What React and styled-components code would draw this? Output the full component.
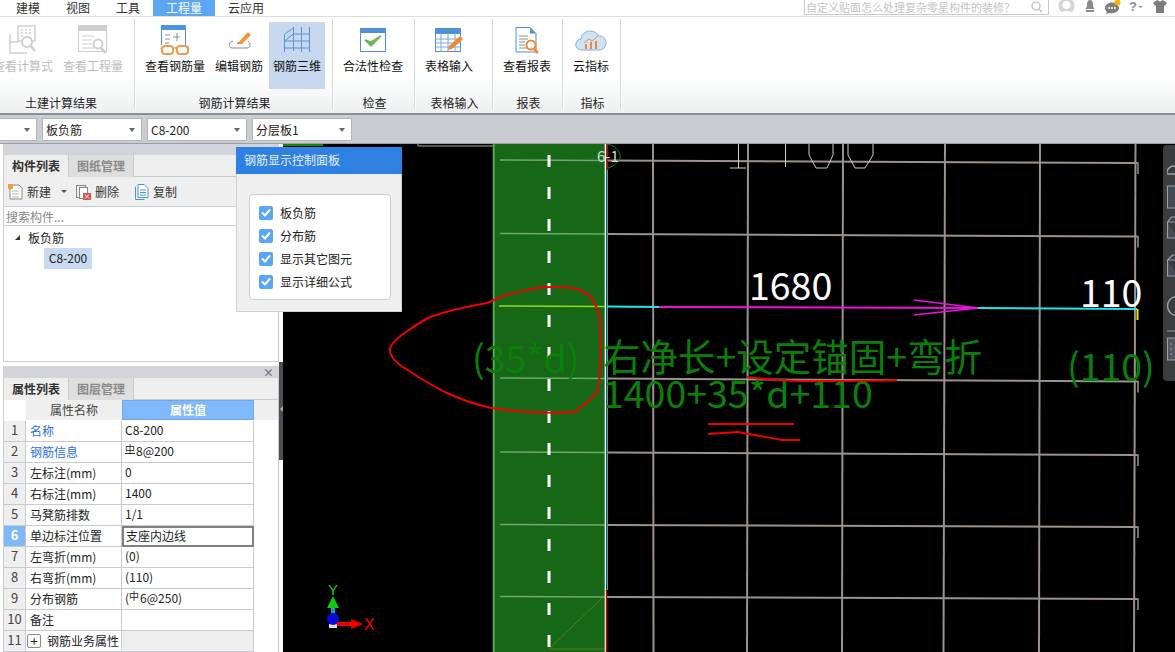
import React from "react";
import styled, { createGlobalStyle } from "styled-components";

const Global = createGlobalStyle`
  html, body { margin: 0; padding: 0; width: 1175px; height: 652px; overflow: hidden; background: #fff; }
  body, button, input { font-family: "Noto Sans CJK SC", "Noto Sans", sans-serif; font-size: 12px; }
  * { box-sizing: border-box; }
`;

const Page = styled.div`
  width: 1175px; height: 652px; display: flex; flex-direction: column; overflow: hidden; color: #1a1a1a;
`;

/* ---------- top menu ---------- */
const MenuBar = styled.div`
  height: 17px; flex: none; display: flex; padding-left: 3px; border-bottom: 1px solid #dcdcdc; background: #fff; overflow: hidden;
`;
const MenuTab = styled.div`
  height: 16px; line-height: 15px; padding: 0 13px; color: ${p => (p.$active ? "#fff" : "#333")};
  background: ${p => (p.$active ? "#5ba5f2" : "transparent")};
`;
const MenuRight = styled.div`
  margin-left: auto; display: flex; align-items: flex-start; height: 16px;
`;
const SearchBox = styled.div`
  width: 245px; height: 15px; border: 1px solid #c8c8c8; border-top: 0; display: flex; align-items: center; justify-content: space-between;
  padding: 0 5px 0 1px; color: #c4c4c4; font-size: 11px; line-height: 13px; margin-right: 9px;
`;
const TopIcons = styled.div`
  display: flex; align-items: flex-start; gap: 8px; padding-right: 8px; height: 15px;
`;

/* ---------- ribbon ---------- */
const Ribbon = styled.div`
  height: 98px; flex: none; display: flex; padding: 2px 0 4px; margin-left: 0;
  background: linear-gradient(#fff 0, #fff 62%, #edf0f0 100%);
  border-bottom: 2px solid #8b8f94; overflow: hidden;
`;
const Group = styled.div`
  flex: none; width: ${p => p.$w}px; margin-left: ${p => p.$ml || 0}px; height: 91px;
  border-right: 1px solid #d6dada; box-shadow: 1px 0 0 #fff;
  display: flex; flex-direction: column; padding: 3px 0 0 ${p => p.$pl ?? 6}px;
`;
const GroupButtons = styled.div`
  display: flex; gap: 2px; height: 67px;
`;
const GroupLabel = styled.div`
  margin: 7px 0 0 -${p => p.$pl ?? 6}px; height: 14px; line-height: 14px; padding-left: 2px; text-align: center; color: #222;
`;
const RibbonButton = styled.div`
  display: flex; flex-direction: column; align-items: center; height: 67px; padding: 2px 4px 0;
  background: ${p => (p.$active ? "#c7d7ee" : "transparent")};
  color: ${p => (p.$off ? "#bdbdbd" : "#111")};
`;
const IconSlot = styled.div`
  height: 32px; display: flex; align-items: center; justify-content: center;
`;
const ButtonText = styled.div`
  margin-top: 3px; height: 14px; line-height: 14px; white-space: nowrap;
`;

/* ---------- selector strip ---------- */
const SelectStrip = styled.div`
  height: 29px; flex: none; background: #c9ccd1; display: flex; gap: 5px; padding-top: 3px; border-bottom: 1px solid #9ca0a6;
`;
const Select = styled.div`
  width: ${p => p.$w || 100}px; height: 23px; background: #fff; border: 1px solid #b2b4b8; border-radius: 1px;
  ${p => p.$cut && "border-left: 0;"}
  display: flex; align-items: center; justify-content: space-between; padding: 0 6px 0 3px; color: #222;
  &::after { content: ""; border: 3.5px solid transparent; border-top: 4px solid #666; margin-top: 4px; margin-left: auto; }
`;

/* ---------- main ---------- */
const Main = styled.div`
  flex: 1; min-height: 0; display: flex; position: relative;
`;
const Sidebar = styled.div`
  width: 283px; flex: none; background: #fff; display: flex; flex-direction: column; position: relative;
`;
const Pane = styled.div`
  width: 276px; margin-left: 3px; border: 1px solid #c8ccd2; border-top: 0; display: flex; flex-direction: column; background: #fff;
`;
const TitleStrip = styled.div`
  margin-left: -1px; margin-right: -1px; height: ${p => p.$h}px; background: #d2d4d9; flex: none; display: flex; justify-content: flex-end; align-items: center; padding-right: 5px;
  color: #777; font-size: 11px; font-weight: 700; line-height: ${p => p.$h}px;
`;
const Tabs = styled.div`
  display: flex; height: 22px; flex: none; background: #eee; border-bottom: 1px solid #c8ccd2;
`;
const Tab = styled.div`
  width: 65px; height: 22px; line-height: 21px; text-align: center; font-weight: 700; border-right: 1px solid #c8ccd2;
  background: ${p => (p.$active ? "#eee" : "#dedede")}; color: ${p => (p.$active ? "#333" : "#8a8a8a")};
`;
const ActionBar = styled.div`
  height: 30px; flex: none; background: #efefef; border-bottom: 1px solid #c8ccd2; display: flex; align-items: center; padding-left: 4px; color: #333;
`;
const Action = styled.div`
  display: flex; align-items: center; gap: 4px; margin-right: ${p => p.$mr}px;
`;
const Caret = styled.span`
  border: 3px solid transparent; border-top: 3.5px solid #555; margin: 3px 0 0 6px;
`;
const SearchField = styled.div`
  height: 19px; flex: none; line-height: 19px; padding-left: 2px; color: #888; border-bottom: 1px solid #c8ccd2;
`;
const Tree = styled.div`
  height: 135px; flex: none; padding-top: 2px;
`;
const TreeRoot = styled.div`
  display: flex; align-items: center; height: 19px; padding-left: 11px; gap: 8px; color: #222;
`;
const TreeArrow = styled.span`
  width: 0; height: 0; border-left: 5px solid transparent; border-bottom: 5px solid #333;
`;
const TreeLeaf = styled.div`
  margin: 1px 0 0 40px; width: 48px; height: 21px; line-height: 20px; text-align: center; background: #c8daf1; color: #222;
`;
const Gap = styled.div` height: 4px; flex: none; `;

const Grid = styled.div`
  display: grid; grid-template-columns: 22px 96px 132px 1fr; grid-auto-rows: 21px; line-height: 18px; background: #fff;
`;
const HeadCell = styled.div`
  background: ${p => (p.$val ? "#7fb9fa" : p.$blank ? "#fff" : "#efefef")};
  color: ${p => (p.$val ? "#fff" : "#444")}; text-align: center; font-weight: ${p => (p.$val ? 700 : 400)}; height: 20px; line-height: ${p => (p.$val ? "18px" : "20px")};
  ${p => p.$val && "border: 1px solid #6ea8ea;"}
`;
const IndexCell = styled.div`
  text-align: center; font-size: 13px; color: ${p => (p.$on ? "#fff" : "#444")}; font-weight: ${p => (p.$on ? 700 : 400)};
  background: ${p => (p.$on ? "#7fb9fa" : "#efefef")}; border-right: 1px solid #c8ccd2; border-bottom: 1px solid #c8ccd2;
`;
const NameCell = styled.div`
  padding: 0 0 1px 4px; color: ${p => (p.$link ? "#2b6fe6" : "#222")}; white-space: nowrap; border-right: 1px solid #c8ccd2; border-bottom: 1px solid #c8ccd2;
  display: flex; align-items: center; gap: 6px;
`;
const ValueCell = styled.div`
  padding-left: 3px; white-space: nowrap; color: #222; border-right: 1px solid #c8ccd2; border-bottom: 1px solid #c8ccd2;
  background: ${p => (p.$fill ? "#eee" : "#fff")};
  ${p => p.$focus && "border: 2px solid #808080; padding-left: 2px; line-height: 16px;"}
`;
const RestCell = styled.div``;
const Plus = styled.span`
  width: 14px; height: 14px; border: 1px solid #888; border-radius: 2px; display: flex; align-items: center; justify-content: center; font-size: 13px; line-height: 11px; margin-left: -3px;
`;
const Steel = styled.span`
  display: inline-block; font-size: 10px; line-height: 10px; vertical-align: 3px; margin-right: 1px;
  ${p => p.$bar && "border-bottom: 1px solid #222; height: 10px;"}
`;
const SplitBar = styled.div`
  position: absolute; right: 0; top: 218px; width: 4px; height: 98px; background: #4d4f52;
  &::after { content: ""; position: absolute; top: 44px; left: 0; border: 3px solid transparent; border-right: 3px solid #aaa; margin-left: -2px; }
`;

/* ---------- canvas ---------- */
const Canvas = styled.div`
  flex: 1; background: #000; position: relative; overflow: hidden;
  svg.cad { display: block; }
`;
const FloatTools = styled.div`
  position: absolute; right: 0; top: 1px; width: 12px; height: 236px; background: #3b3c3e; border-radius: 4px 0 0 4px; overflow: hidden;
  padding: 15px 0 0 4px; display: flex; flex-direction: column;
`;

/* ---------- control popup ---------- */
const Popup = styled.div`
  position: absolute; left: 236px; top: 3px; width: 166px; height: 165px; background: #efefef; border: 1px solid #c9d0dc; border-top: 0;
`;
const PopupTitle = styled.div`
  height: 27px; margin: 0 -1px; background: #2e80e2; color: #e8f1fc; line-height: 26px; padding-left: 8px;
`;
const PopupBox = styled.div`
  margin: 20px 0 0 12px; width: 142px; height: 106px; background: #fff; border: 1px solid #ccc; border-radius: 4px; padding: 6px 0 0 9px;
`;
const CheckRow = styled.div`
  height: 23px; display: flex; align-items: center; gap: 7px; color: #222;
`;
const CheckBox = styled.span`
  width: 14px; height: 14px; background: #5aa6f6; border-radius: 2px; display: flex; align-items: center; justify-content: center;
`;

/* ---------- icons ---------- */
const IconCalc = () => (
  <svg width="28" height="30" viewBox="0 0 28 30" fill="none" stroke="#cfcfcf" strokeWidth="1.5">
    <path d="M1 9v19h17M1 17h8" /><rect x="9" y="1" width="17" height="15" fill="#fff" />
    <path d="M12 5h2M16 5h2M20 5h2M12 8h2M16 8h2M20 8h2M12 11h2" strokeWidth="1.5" />
    <circle cx="18" cy="17" r="5" fill="#fff" strokeWidth="2" /><path d="M22 21l4 5" strokeWidth="2.5" />
  </svg>
);
const IconQty = () => (
  <svg width="30" height="30" viewBox="0 0 30 30" fill="none" stroke="#d0d0d0" strokeWidth="1.2">
    <rect x="0.5" y="0.5" width="28" height="26" /><rect x="0" y="0" width="29" height="6" fill="#cfcfcf" stroke="none" />
    <path d="M4 11h12M4 15h10M4 19h10M4 23h12" />
    <circle cx="20" cy="19" r="4.5" fill="#fff" strokeWidth="2" /><path d="M23 23l5 5" strokeWidth="2.5" />
  </svg>
);
const IconGlasses = () => (
  <svg width="30" height="30" viewBox="0 0 30 30" fill="none">
    <path d="M1.5 20V.5h24V20" fill="#fff" stroke="#4f8fdc" strokeWidth="1" />
    <rect x="1" y="0" width="25" height="5" fill="#4f94e4" />
    <path d="M5 10h5M5 14h5M5 18h4M13 12h7M17 8v8" stroke="#8a8f96" strokeWidth="1" fill="none" />
    <rect x="2" y="21" width="11" height="8" rx="3" fill="#fff" stroke="#f19a50" strokeWidth="2" />
    <rect x="17" y="21" width="11" height="8" rx="3" fill="#fff" stroke="#f19a50" strokeWidth="2" />
    <path d="M13 23h4M2 22l-1 2M28 22l1 2" stroke="#f19a50" strokeWidth="1.6" />
  </svg>
);
const IconEdit = () => (
  <svg width="25" height="19" viewBox="0 0 25 19" fill="none">
    <path d="M6 10C2 10 1 16 5 17h15c4 0 4-6 1-7" stroke="#8a8a8a" strokeWidth="1" />
    <path d="M10 13l11-12 3 3-9 9z" fill="#f09640" /><path d="M10 13l1-2 2 2z" fill="#c9762c" />
  </svg>
);
const IconRebar3d = () => (
  <svg width="28" height="26" viewBox="0 0 28 26" fill="none" stroke="#5a93d8" strokeWidth="1">
    <path d="M1.5 7v18M10.5 0v24M18.5 0v25M26.5 0v25" />
    <path d="M1.5 7L10.5 1M10.5 7h16M1.5 14h25M1.5 21h25M1.5 14L10.5 7" />
  </svg>
);
const IconCheck = () => (
  <svg width="26" height="24" viewBox="0 0 26 24" fill="none">
    <rect x="0.5" y="0.5" width="25" height="23" fill="#fff" stroke="#4f8fdc" />
    <rect x="0" y="0" width="26" height="5" fill="#4f8fdc" />
    <path d="M5 12l6 6 10-10-10 6z" fill="#74b35e" stroke="#74b35e" strokeWidth="1.5" />
  </svg>
);
const IconTable = () => (
  <svg width="29" height="24" viewBox="0 0 29 24" fill="none">
    <rect x="0.5" y="0.5" width="25" height="23" fill="#fff" stroke="#4f8fdc" />
    <rect x="0" y="0" width="26" height="6" fill="#4f8fdc" />
    <path d="M0 11h25M0 15h25M0 19h25M6 5v18M13 5v18M20 5v18" stroke="#7aa8e0" />
    <path d="M13 22l1-4L25 8l3 3-11 10z" fill="#f08a30" />
  </svg>
);
const IconReport = () => (
  <svg width="25" height="27" viewBox="0 0 25 27" fill="none">
    <path d="M1 .5h14l6 6V25H1z" fill="#fff" stroke="#4f8fdc" />
    <path d="M15 .5l6 6h-6z" fill="#4f8fdc" />
    <path d="M4 9h9M4 12h9M4 15h6M4 18h6M4 21h8" stroke="#8a8f96" />
    <circle cx="16" cy="18" r="4.5" fill="#fff" stroke="#f08a30" strokeWidth="2" />
    <path d="M19 22l4 4" stroke="#f08a30" strokeWidth="2.5" />
  </svg>
);
const IconCloud = () => (
  <svg width="32" height="21" viewBox="0 0 32 21" fill="none">
    <path d="M7 20C2 20 0 16 1 13c1-3 3-4 5-4 0-4 4-8 9-8 4 0 7 2 8 5 5-1 8 3 8 7s-3 7-7 7z" fill="#cfe3f8" stroke="#7fb2e8" />
    <path d="M9 13l5-4 3 2 6-5" stroke="#f08a30" />
    <rect x="10" y="14" width="2" height="5" fill="#f08a30" /><rect x="15" y="12" width="2" height="7" fill="#f08a30" /><rect x="20" y="11" width="2" height="8" fill="#f08a30" />
  </svg>
);
const IconNew = () => (
  <svg width="15" height="16" viewBox="0 0 15 16" fill="none">
    <path d="M2 1h9l3 3v11H2z" fill="#fff" stroke="#8a8a8a" /><path d="M4 7h7M4 10h7M4 13h7" stroke="#b5b5b5" />
    <rect x="0" y="0" width="5" height="5" fill="#f2a03c" />
  </svg>
);
const IconDel = () => (
  <svg width="15" height="16" viewBox="0 0 15 16" fill="none">
    <rect x="0.5" y="1.5" width="9" height="12" fill="#eee" stroke="#888" /><rect x="3.5" y="3.5" width="8" height="11" fill="#fff" stroke="#888" />
    <rect x="7" y="9" width="8" height="7" fill="#d9534f" /><path d="M9 10.5l4 4M13 10.5l-4 4" stroke="#fff" />
  </svg>
);
const IconCopy = () => (
  <svg width="14" height="16" viewBox="0 0 14 16" fill="none" stroke="#4f8fdc">
    <path d="M.5 2.5v13h9" /><path d="M3 .5h6l4 4v9H3z" fill="#fff" /><path d="M5 6h6M5 8.5h6M5 11h6" />
  </svg>
);
const Magnifier = () => (
  <svg width="12" height="12" viewBox="0 0 12 12" fill="none" stroke="#bbb" strokeWidth="1.2"><circle cx="5" cy="5" r="4" /><path d="M8 8l3 3" /></svg>
);
const TopIconSet = () => (
  <TopIcons>
    <svg width="17" height="14" viewBox="0 0 17 14"><circle cx="8.5" cy="6" r="8" fill="#d4d4d4" /><circle cx="8.5" cy="5" r="4" fill="#fff" /><path d="M2 14c1-4 12-4 13 0z" fill="#fff" /></svg>
    <svg width="14" height="14" viewBox="0 0 14 14"><path d="M2 9c2-1 2-3 2-5s1-4 3-4 3 2 3 4 0 4 2 5z" fill="#8b8b8b" /><rect x="3" y="10" width="8" height="2" fill="#8b8b8b" /></svg>
    <svg width="16" height="15" viewBox="0 0 16 15"><path d="M7 2.5C3 2.5 0 5 0 8c0 2 1 3 2 4l-1 2 4-1c5 1 9-2 9-5s-3-5.500-7-5.500z" fill="#7e7e7e" /><circle cx="4" cy="8" r="1" fill="#fff" /><circle cx="7" cy="8" r="1" fill="#fff" /><circle cx="10" cy="8" r="1" fill="#fff" /><circle cx="12.500" cy="2.500" r="3" fill="#f5b400" /></svg>
    <svg width="16" height="14" viewBox="0 0 16 14"><text x="0" y="11" fontSize="13" fontWeight="700" fill="#8b8b8b" fontFamily="Liberation Sans">?</text><path d="M9 6h5l-2.500 2z" fill="#999" /></svg>
    <svg width="14" height="13" viewBox="0 0 14 13"><path d="M4 0l3 1.500L10 0l4 3-2 3-1-1v8H3V5L2 6 0 3z" fill="#7d7d7d" /></svg>
  </TopIcons>
);

const CheckMark = () => (
  <svg width="10" height="9" viewBox="0 0 10 9" fill="none" stroke="#fff" strokeWidth="2"><path d="M1 4.500l3 3 5-6" /></svg>
);

/* ---------- CAD drawing data ---------- */
const ROWS = [[160.5, 163], [234, 236.5], [378.5, 381.5], [452.5, 455], [525, 527], [597, 599]];
const COLS = [[653, 653.5], [748, 747], [843, 842], [945, 943.5], [1040, 1039], [1135.5, 1134]];
const DASHES = Array.from({ length: 16 }, (_, i) => 155 + i * 32);
const GRID = "#9c918c";
const CAD_FONT = "Noto Sans CJK SC";

const CadDrawing = () => (
  <svg className="cad" width="892" height="508" viewBox="283 144 892 508">
    <path d="M283 144h40v2h-40z" fill="#0a8a0a" />
    <path d="M418 144v2h75" stroke="#aaa" fill="none" />
    <rect x="492.500" y="144" width="113.500" height="508" fill="#166716" />
    <path d="M493.800 144V652" stroke="#68b068" strokeWidth="1.500" />
    {COLS.map(([a, b]) => <line key={a} x1={a} y1="144" x2={b} y2="652" stroke={GRID} strokeWidth="2" />)}
    {ROWS.map(([a, b]) => <line key={a} x1="607" y1={a} x2="1137" y2={b} stroke={GRID} strokeWidth="2" />)}
    {ROWS.map(([a, b]) => <path key={a} d={`M1137 ${b}h1v11`} stroke={GRID} strokeWidth="1.500" fill="none" />)}
    {ROWS.map(([a]) => <line key={a} x1="500" y1={a - 0.5} x2="605" y2={a} stroke="#6fa96f" strokeWidth="1.500" />)}
    <path d="M602 598L549 649H604" stroke="#5a7a1c" fill="none" />
    {DASHES.map(y => <rect key={y} x="547.500" y={y} width="3" height="12" fill="#fff" />)}
    <path d="M605.500 144V652" stroke="#fff" strokeWidth="1.600" />
    <path d="M607.500 170V590" stroke="#16b8c8" strokeWidth="1" />
    <path d="M607.500 144v26M606.500 590V652" stroke="#d40000" strokeWidth="1.400" />
    <path d="M738.500 144v24M730 168h16M785.500 144v23" stroke="#cfcfcf" fill="none" />
    <path d="M809 144v11l7 13h11l6-13v-11M848 144v11l7 13h10l8-13v-11" stroke="#c8c8c8" fill="none" />
    <path d="M608 144c10 3 13 10 12 14s-6 8-12 10" stroke="#0a8a0a" fill="none" />
    <text x="597" y="162" fontSize="15" fill="#d0d8d0" fontFamily={CAD_FONT}>6-1</text>

    <line x1="499" y1="306" x2="605" y2="306.500" stroke="#8fdc10" strokeWidth="1.600" />
    <line x1="607" y1="306.500" x2="659" y2="307" stroke="#22e6ea" strokeWidth="2" />
    <line x1="659" y1="307" x2="978" y2="308" stroke="#f010e0" strokeWidth="2" />
    <path d="M914 300L978 308L914 315" stroke="#f010e0" strokeWidth="1.600" fill="none" />
    <line x1="978" y1="308" x2="1137" y2="309" stroke="#22e6ea" strokeWidth="2" />
    <line x1="1137.500" y1="309" x2="1137.500" y2="320" stroke="#f0e800" strokeWidth="2" />

    <text x="749" y="300" fontSize="37.500" fill="#fff" fontFamily={CAD_FONT}>1680</text>
    <text x="1080" y="307" fontSize="37.500" fill="#fff" fontFamily={CAD_FONT}>110</text>
    <text x="472" y="373" fontSize="37.500" fill="#0a800a" fontFamily={CAD_FONT}>(35*d)</text>
    <text x="603" y="371" fontSize="37.500" fill="#0a800a" fontFamily={CAD_FONT}>右净长+设定锚固+弯折</text>
    <text x="603" y="408" fontSize="37.500" fill="#0a800a" fontFamily={CAD_FONT}>1400+35*d+110</text>
    <text x="1067" y="381" fontSize="37.500" fill="#0a800a" fontFamily={CAD_FONT}>(110)</text>

    <path d="M390 348C392 340 415 325 430 317C450 310 470 306 487 303C495 300 503 295 510 294C525 291 535 287 547 287C560 287 570 287 577 289C585 292 590 295 593 300C598 310 600 315 600 323C601 345 601 370 598 390C594 398 586 402 580 408L575 412C560 413 545 413 530 412C515 411 500 410 487 407C470 403 458 398 447 393C430 385 415 375 400 365C394 360 389 355 390 348Z" fill="none" stroke="#f00000" strokeWidth="2" />
    <path d="M747 377C770 380 790 381 813 381S870 381 897 380" fill="none" stroke="#f00000" strokeWidth="2" />
    <path d="M708 424H794" fill="none" stroke="#f00000" strokeWidth="1.800" />
    <path d="M708 434L738 432L782 440H800" fill="none" stroke="#f00000" strokeWidth="1.800" />

    <path d="M333 596l6 12h-12z" fill="#0ccc0c" />
    <rect x="331" y="608" width="4" height="6" fill="#10a0c0" />
    <rect x="329" y="622" width="8" height="6" fill="#ddd" />
    <circle cx="333" cy="619" r="6" fill="#0808d8" />
    <path d="M337 622h14v-3l12 5-12 5v-3h-14z" fill="#f00000" />
    <text x="328" y="595" fontSize="15" fill="#10d810" fontFamily="Liberation Sans">Y</text>
    <text x="364" y="630" fontSize="16" fill="#f00000" fontFamily="Liberation Sans">X</text>
  </svg>
);

const ToolStrip = () => (
  <svg width="8" height="216" viewBox="0 0 8 216" fill="none" stroke="#99a0a8">
    <path d="M0 14a7 7 0 0 1 8-8M0 14h8" strokeWidth="1.500" />
    <rect x="0.500" y="26" width="10" height="22" fill="#454b55" />
    <path d="M.5 62l4-5h6M.5 62v16h10M.5 62h10" strokeWidth="1.200" fill="#454b55" />
    <path d="M.5 100l5-5h5M.5 100v16h10M.5 100h10" strokeWidth="1.200" fill="#454b55" />
    <circle cx="10" cy="146" r="9.500" strokeWidth="1.500" />
    <path d="M0 171h8" />
    <rect x="0.500" y="178" width="10" height="22" fill="#54585e" /><path d="M3 184h2M3 189h2M3 194h2" />
  </svg>
);

const PROPS = [
  ["名称", "C8-200", { link: true }],
  ["钢筋信息", <><Steel $bar>中</Steel>8@200</>, { link: true }],
  ["左标注(mm)", "0"],
  ["右标注(mm)", "1400"],
  ["马凳筋排数", "1/1"],
  ["单边标注位置", "支座内边线", { focus: true }],
  ["左弯折(mm)", "(0)"],
  ["右弯折(mm)", "(110)"],
  ["分布钢筋", <>(<Steel>中</Steel>6@250)</>],
  ["备注", ""],
];

const RIBBON = [
  { w: 149, ml: -14, pl: 3, label: "土建计算结果", items: [["查看计算式", <IconCalc />, { off: 1 }], ["查看工程量", <IconQty />, { off: 1 }]] },
  { w: 198, label: "钢筋计算结果", items: [["查看钢筋量", <IconGlasses />], ["编辑钢筋", <IconEdit />], ["钢筋三维", <IconRebar3d />, { active: 1 }]] },
  { w: 82, label: "检查", items: [["合法性检查", <IconCheck />]] },
  { w: 78, label: "表格输入", items: [["表格输入", <IconTable />]] },
  { w: 70, label: "报表", items: [["查看报表", <IconReport />]] },
  { w: 58, pl: 6, label: "指标", items: [["云指标", <IconCloud />]] },
];

export default function App() {
  return (
    <Page>
      <Global />
      <MenuBar>
        {["建模", "视图", "工具", "工程量", "云应用"].map(t => <MenuTab key={t} $active={t === "工程量"}>{t}</MenuTab>)}
        <MenuRight>
          <SearchBox>自定义贴面怎么处理复杂零星构件的装修？<Magnifier /></SearchBox>
          <TopIconSet />
        </MenuRight>
      </MenuBar>

      <Ribbon>
        {RIBBON.map(g => (
          <Group key={g.label} $w={g.w} $ml={g.ml} $pl={g.pl}>
            <GroupButtons>
              {g.items.map(([t, icon, o = {}]) => (
                <RibbonButton key={t} $off={o.off} $active={o.active}>
                  <IconSlot>{icon}</IconSlot>
                  <ButtonText>{t}</ButtonText>
                </RibbonButton>
              ))}
            </GroupButtons>
            <GroupLabel $pl={g.pl}>{g.label}</GroupLabel>
          </Group>
        ))}
      </Ribbon>

      <SelectStrip>
        <Select $w={37} $cut />
        <Select>板负筋</Select>
        <Select>C8-200</Select>
        <Select>分层板1</Select>
      </SelectStrip>

      <Main>
        <Sidebar>
          <Pane>
            <TitleStrip $h={11} />
            <Tabs><Tab $active>构件列表</Tab><Tab>图纸管理</Tab></Tabs>
            <ActionBar>
              <Action $mr={9}><IconNew />新建<Caret /></Action>
              <Action $mr={16}><IconDel />删除</Action>
              <Action $mr={0}><IconCopy />复制</Action>
            </ActionBar>
            <SearchField>搜索构件...</SearchField>
            <Tree>
              <TreeRoot><TreeArrow />板负筋</TreeRoot>
              <TreeLeaf>C8-200</TreeLeaf>
            </Tree>
          </Pane>
          <Gap />
          <Pane>
            <TitleStrip $h={12}>×</TitleStrip>
            <Tabs><Tab $active>属性列表</Tab><Tab>图层管理</Tab></Tabs>
            <Grid>
              <HeadCell $blank /><HeadCell>属性名称</HeadCell><HeadCell $val>属性值</HeadCell><HeadCell />
              {PROPS.map(([name, val, o = {}], i) => (
                <React.Fragment key={name}>
                  <IndexCell $on={i === 5}>{i + 1}</IndexCell>
                  <NameCell $link={o.link}>{name}</NameCell>
                  <ValueCell $focus={o.focus}>{val}</ValueCell>
                  <RestCell />
                </React.Fragment>
              ))}
              <IndexCell>11</IndexCell>
              <NameCell><Plus>+</Plus>钢筋业务属性</NameCell>
              <ValueCell $fill />
              <RestCell />
            </Grid>
          </Pane>
          <SplitBar />
        </Sidebar>

        <Canvas>
          <CadDrawing />
          <FloatTools><ToolStrip /></FloatTools>
        </Canvas>

        <Popup>
          <PopupTitle>钢筋显示控制面板</PopupTitle>
          <PopupBox>
            {["板负筋", "分布筋", "显示其它图元", "显示详细公式"].map(t => (
              <CheckRow key={t}><CheckBox><CheckMark /></CheckBox>{t}</CheckRow>
            ))}
          </PopupBox>
        </Popup>
      </Main>
    </Page>
  );
}
